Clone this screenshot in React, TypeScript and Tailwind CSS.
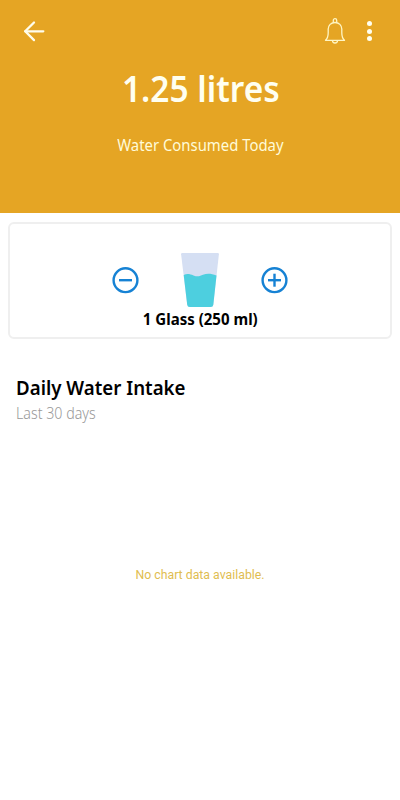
function BackIcon() {
  return (
    <svg className="w-6 h-6" viewBox="0 0 24 24" fill="none" stroke="#fffdec" strokeWidth="2.3" strokeLinecap="round" strokeLinejoin="round">
      <path d="M21.3 12.3H3.2" />
      <path d="M12 3.5L3.2 12.3L12 21.1" />
    </svg>
  );
}

function BellIcon() {
  return (
    <svg className="w-[22px] h-[28px]" viewBox="0 0 22 28" fill="none" stroke="#fff6c4" strokeWidth="1.3" strokeLinejoin="round">
      <path d="M9.3 5.3V3.3a1.7 1.7 0 0 1 3.4 0V5.3" />
      <path d="M1.5 23.3c2-1.7 2.7-4 2.7-7.5v-3.7C4.2 8.3 7 5.5 11 5.5s6.8 2.8 6.8 6.6v3.7c0 3.5.7 5.8 2.7 7.5z" />
      <path d="M8.5 23.5a2.5 2.5 0 0 0 5 0" />
    </svg>
  );
}

function StepIcon({ plus = false }: { plus?: boolean }) {
  return (
    <svg className="size-[27px]" viewBox="0 0 27 27" fill="none" stroke="#1682d4" strokeWidth="2.4">
      <circle cx="13.5" cy="13.2" r="11.9" />
      <path d="M7 13.2H20" />
      {plus && <path d="M13.5 6.7V19.7" />}
    </svg>
  );
}

function GlassIcon() {
  return (
    <svg className="w-[38px] h-[54px]" viewBox="0 0 38 54">
      <path d="M1.2 0H36.8Q38 0 37.9 1.2L32.3 51.7Q32 54 29.7 54H8.8Q6.5 54 6.2 51.7L0.1 1.2Q0 0 1.2 0Z" fill="#d5dff3" />
      <path d="M2.7 22C6 20.2 9 21 12.5 22.4C17 24.2 19 23 22 21.7C26 20.2 30 20.3 35.5 22.5L32.3 51.7Q32 54 29.7 54H8.8Q6.5 54 6.2 51.7Z" fill="#4dcfdf" />
    </svg>
  );
}

export default function App() {
  return (
    <div className="flex h-[800px] w-[400px] flex-col overflow-hidden bg-white font-['Noto_Sans','Open_Sans',sans-serif]">
      {/* Header */}
      <header className="h-[213px] bg-[#e5a524] text-[#fffff0]">
        <div className="flex h-[62px] items-center pl-[22px] pr-[28px]">
          <button aria-label="Back"><BackIcon /></button>
          <button aria-label="Reminders" className="ml-auto"><BellIcon /></button>
          <button aria-label="More" className="ml-[21px] flex flex-col gap-[2.5px]">
            <span className="size-[5px] rounded-full bg-[#fffff0]" />
            <span className="size-[5px] rounded-full bg-[#fffff0]" />
            <span className="size-[5px] rounded-full bg-[#fffff0]" />
          </button>
        </div>
        <div className="flex flex-col items-center whitespace-nowrap">
          <h1 className="mt-[3px] pl-px text-[36px] leading-[48px] font-semibold scale-x-[0.93]">1.25 litres</h1>
          <p className="mt-[20px] text-[16px] leading-[24px] text-[#fffbd8] scale-x-[0.93]">Water Consumed Today</p>
        </div>
      </header>

      {/* Intake card */}
      <section className="mx-2 mt-[9px] flex h-[117px] flex-col items-center rounded-md border-2 border-[#efefef] pt-[29px]">
        <div className="flex items-center gap-[42px]">
          <button aria-label="Remove glass"><StepIcon /></button>
          <GlassIcon />
          <button aria-label="Add glass"><StepIcon plus /></button>
        </div>
        <p className="mt-px text-[15.5px] leading-[22px] font-bold whitespace-nowrap text-black scale-x-[0.97]">1 Glass (250 ml)</p>
      </section>

      {/* Chart */}
      <section className="flex flex-col items-start pl-4 whitespace-nowrap">
        <h2 className="mt-[35px] origin-left text-[20px] leading-[28px] font-semibold text-black scale-x-[0.935]">Daily Water Intake</h2>
        <p className="-mt-px origin-left text-[16px] leading-[24px] font-light text-[#999999] scale-x-[0.89]">Last 30 days</p>
      </section>
      <p className="mt-[141px] text-center font-[Roboto,sans-serif] text-[12.3px] leading-[18px] text-[#dfbd50]">No chart data available.</p>
    </div>
  );
}
